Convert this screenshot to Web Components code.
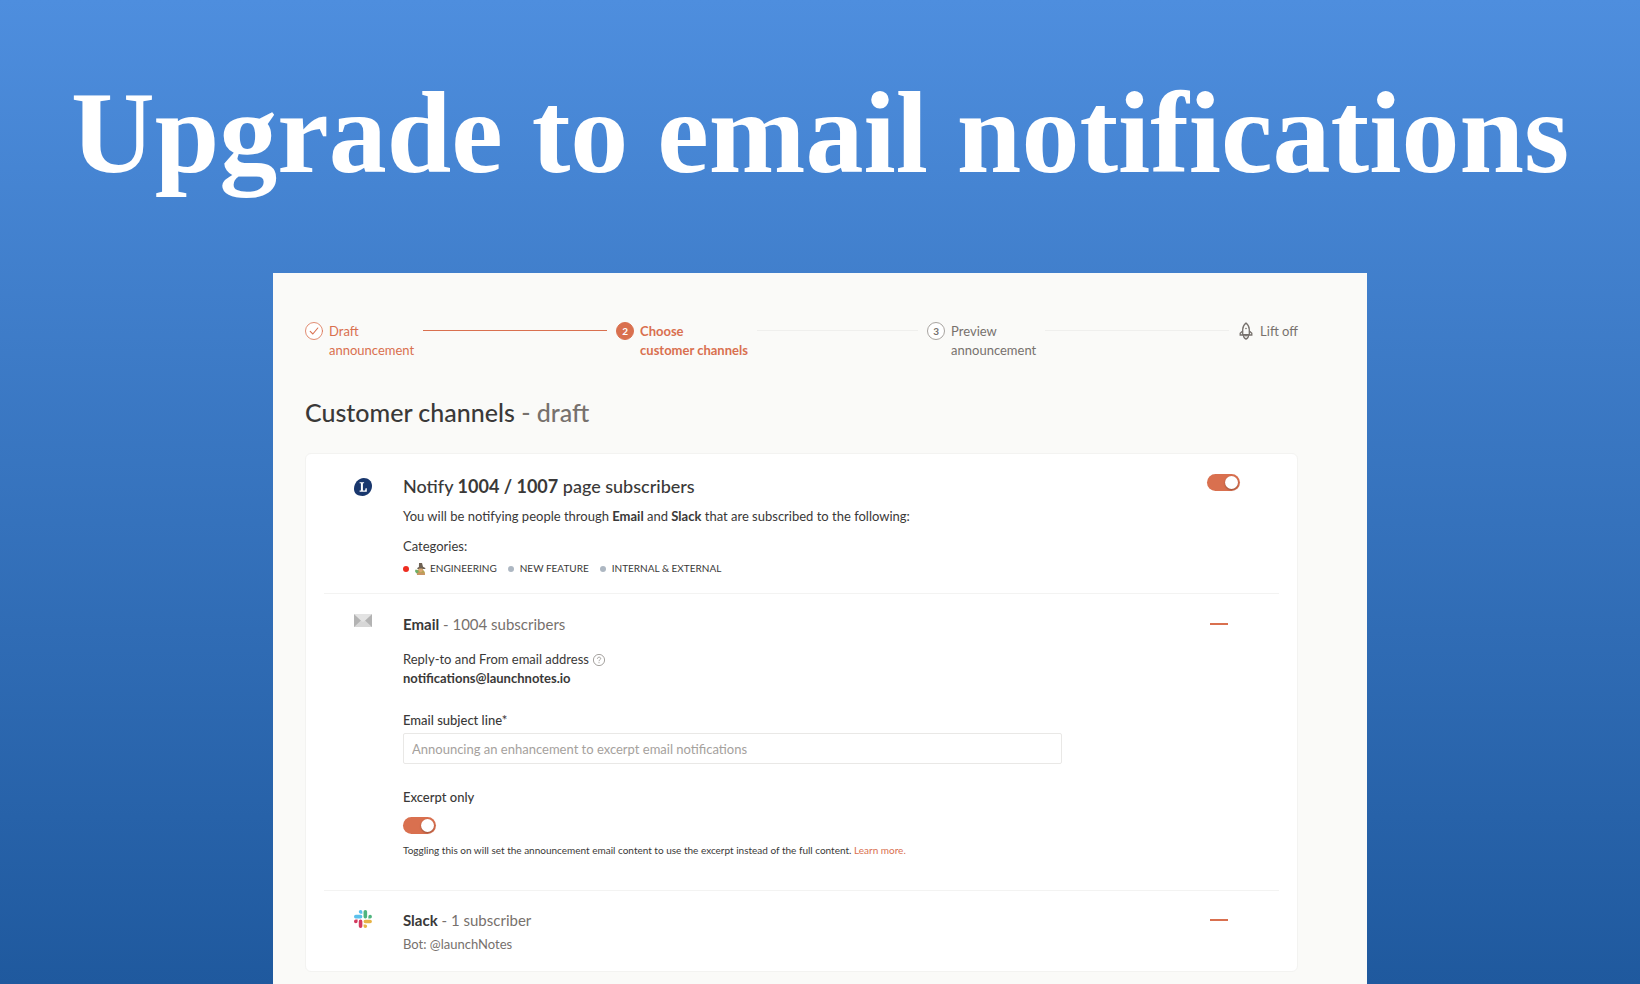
<!DOCTYPE html>
<html lang="en">
<head>
<meta charset="utf-8">
<meta name="viewport" content="width=device-width, initial-scale=1">
<title>Upgrade to email notifications</title>
<style>
    * {
        box-sizing: border-box;
    }

    body {
        --accent: #d9704f;
        --ink: #3a3938;
        --muted: #77716d;
        --line: #efefed;
        margin: 0;
        min-height: 100vh;
        display: flex;
        flex-direction: column;
        color: var(--ink);
        font: 13px/19px Lato, "Liberation Sans", sans-serif;
        background: linear-gradient(#4e8ede, #1f599e);
    }

    .draft {
        color: var(--muted);
    }
</style>
</head>
<body>

<page-hero>Upgrade to email notifications</page-hero>

<app-panel>
    <step-list>
        <step-item state="done">Draft<br>announcement</step-item>
        <step-item state="current" number="2">Choose<br>customer channels</step-item>
        <step-item number="3">Preview<br>announcement</step-item>
        <step-item state="last">Lift off</step-item>
    </step-list>

    <page-title>Customer channels <span class="draft">- draft</span></page-title>

    <channel-card>
        <channel-row icon="launch" size="large">
            <span slot="title">Notify <b>1004 / 1007</b> page subscribers</span>
            <toggle-switch slot="action" label="Notify page subscribers"></toggle-switch>
            <channel-audience></channel-audience>
        </channel-row>

        <channel-row icon="mail">
            <span slot="title"><b>Email</b> <span class="draft">- 1004 subscribers</span></span>
            <collapse-button slot="action" label="Collapse Email"></collapse-button>
            <email-settings></email-settings>
        </channel-row>

        <channel-row icon="slack" size="small">
            <span slot="title"><b>Slack</b> <span class="draft">- 1 subscriber</span></span>
            <collapse-button slot="action" label="Collapse Slack"></collapse-button>
            <span class="draft">Bot: @launchNotes</span>
        </channel-row>
    </channel-card>
</app-panel>

<script>
// Icons shared by the rows and the steps
const icons = {
    check: `<svg width="18" height="18" viewBox="0 0 18 18" fill="none" stroke="currentColor" stroke-linecap="round">
        <circle cx="9" cy="9" r="8.5" fill="#fff" stroke-width=".8"/>
        <path d="M5.2 9.3 7.8 12 12.8 6" stroke-width="1.1"/>
    </svg>`,
    rocket: `<svg width="16" height="18" viewBox="0 0 16 18" fill="none" stroke="currentColor" stroke-width="1.3" stroke-linejoin="round">
        <path d="M8 .9C5.700 2.800 4.700 5 4.700 7.400v5.300h6.600V7.400C11.300 5 10.300 2.800 8 .9z"/>
        <path d="M4.700 9 2.200 11.300v2.400M11.300 9l2.500 2.300v2.400M1.600 13h12.800"/>
        <path d="M5.500 12.900C5.500 15 6.500 16.500 8 17.200c1.500-.7 2.500-2.200 2.500-4.300M8 13v1.600"/>
        <circle cx="8" cy="6.500" r=".8" fill="currentColor" stroke="none"/>
    </svg>`,
    launch: `<svg width="18" height="18" viewBox="0 0 18 18">
        <path d="M9.800.1C14.500.1 18 3.300 18 8c0 5.400-4.300 9.900-9.400 9.900C3.500 17.900 0 15.600 0 11 0 5.300 4.300.1 9.800.1z" fill="#19376d"/>
        <path d="M5.600 4.200h4.500v1.100H8.900v7.100h2.200l.5-2.200h1.200v3.500H5.600v-1.100h1.300V5.300H5.600z" fill="#fff"/>
    </svg>`,
    mail: `<svg width="18" height="13" viewBox="0 0 18 13">
        <path d="M0 0h18v13H0z" fill="#d7d7d7"/>
        <path d="M0 0v13l7-6.500zM18 0v13l-7-6.500z" fill="#b3b3b3"/>
        <path d="M0 0h18l-7.800 7.300q-1.200 1-2.400 0z" fill="#e3e3e3"/>
    </svg>`,
    slack: `<svg width="18" height="18" viewBox="0 0 54 54">
        <path d="M19.700.1a5.400 5.400 0 0 0 0 10.800h5.400V5.500A5.400 5.400 0 0 0 19.700.1m0 14.400H5.400a5.400 5.400 0 0 0 0 10.800h14.300a5.400 5.400 0 0 0 0-10.800" fill="#5bc1ec"/>
        <path d="M53.800 19.900a5.400 5.400 0 0 0-10.800 0v5.400h5.400a5.400 5.400 0 0 0 5.400-5.400m-14.400 0V5.500a5.400 5.400 0 0 0-10.800 0v14.400a5.400 5.400 0 0 0 10.800 0" fill="#4fb57f"/>
        <path d="M34 54a5.400 5.400 0 0 0 0-10.800h-5.400v5.400A5.400 5.400 0 0 0 34 54m0-14.300h14.400a5.400 5.400 0 0 0 0-10.800H34a5.400 5.400 0 0 0 0 10.800" fill="#e7b345"/>
        <path d="M0 34.200a5.400 5.400 0 0 0 10.800 0v-5.400H5.400A5.400 5.400 0 0 0 0 34.200m14.300 0v14.400a5.400 5.400 0 0 0 10.800 0V34.200a5.400 5.400 0 0 0-10.800 0" fill="#d43a5f"/>
    </svg>`,
    help: `<svg width="12" height="12" viewBox="0 0 12 12" fill="none" stroke="currentColor" stroke-width=".8">
        <circle cx="6" cy="6" r="5.600"/>
        <path d="M4.400 4.800c0-2.200 3.300-2.100 3.300-.2C7.700 5.700 6 5.800 6 7.200M6 8.200v1"/>
    </svg>`,
    wizard: `<svg width="11" height="12" viewBox="0 0 11 12">
        <path d="M1.500 7.500 4 6h3.500l2.300 3v3H2z" fill="#b7a252"/>
        <path d="M4 0h3l1 3.800 2.300 1.100v1H2.500l-.3-.9L3.900 4z" fill="#6f6254"/>
        <path d="M4 5.500h3.500V8L5.800 9.600 4 8z" fill="#dca774"/>
        <path d="M.2 6.800h1.800l1.600 2L2 10.500.2 9z" fill="#6cae69"/>
        <path d="M2.200 10h7.600v2H2.200z" fill="#c99565"/>
    </svg>`
};

class PageHero extends HTMLElement {
    constructor() {
        super();
        this.attachShadow({ mode: "open" });
        this.shadowRoot.innerHTML = `
            <style>
                :host {
                    display: block;
                    padding: 65px 20px 72px;
                    text-align: center;
                }

                h1 {
                    margin: 0;
                    color: #fff;
                    font: bold 116px/136px "Liberation Serif", serif;
                }
            </style>
            <h1><slot></slot></h1>
        `;
    }
}
customElements.define("page-hero", PageHero);

class AppPanel extends HTMLElement {
    constructor() {
        super();
        this.attachShadow({ mode: "open" });
        this.shadowRoot.innerHTML = `
            <style>
                :host {
                    display: block;
                    flex: 1;
                    box-sizing: border-box;
                    width: 100%;
                    max-width: 1094px;
                    margin: 0 auto;
                    padding: 49px 69px 13px 32px;
                    background: #fafaf8;
                }
            </style>
            <main><slot></slot></main>
        `;
    }
}
customElements.define("app-panel", AppPanel);

class StepList extends HTMLElement {
    constructor() {
        super();
        this.attachShadow({ mode: "open" });
        this.shadowRoot.innerHTML = `
            <style>
                nav {
                    display: flex;
                    align-items: flex-start;
                }
            </style>
            <nav aria-label="Progress"><slot></slot></nav>
        `;
    }
}
customElements.define("step-list", StepList);

class StepItem extends HTMLElement {
    constructor() {
        super();
        this.attachShadow({ mode: "open" });
    }

    connectedCallback() {
        const state = this.getAttribute("state");
        let mark = `<span class="number">${this.getAttribute("number")}</span>`;
        if (state === "done") mark = icons.check;
        if (state === "last") mark = icons.rocket;

        this.shadowRoot.innerHTML = `
            <style>
                :host {
                    display: flex;
                    flex: 1;
                    gap: 6px;
                    color: var(--muted);
                    white-space: nowrap;
                }

                :host([state="last"]) {
                    flex: none;
                }

                :host([state="done"]), :host([state="current"]) {
                    color: var(--accent);
                }

                :host([state="current"]) {
                    font-weight: bold;
                }

                svg, .number {
                    flex: none;
                }

                .number {
                    box-sizing: border-box;
                    width: 18px;
                    height: 18px;
                    border: 1px solid #a8a4a0;
                    border-radius: 50%;
                    background: #fff;
                    text-align: center;
                    font: bold 10px/16px Lato, sans-serif;
                }

                :host([state="current"]) .number {
                    border-color: var(--accent);
                    background: var(--accent);
                    color: #fff;
                }

                .line {
                    flex: 1;
                    height: 1px;
                    margin: 8px 9px 0 3px;
                    background: var(--line);
                }

                :host([state="done"]) .line {
                    background: var(--accent);
                }

                :host([state="last"]) .line {
                    display: none;
                }
            </style>
            ${mark}
            <span><slot></slot></span>
            <span class="line"></span>
        `;
    }
}
customElements.define("step-item", StepItem);

class PageTitle extends HTMLElement {
    constructor() {
        super();
        this.attachShadow({ mode: "open" });
        this.shadowRoot.innerHTML = `
            <style>
                h2 {
                    margin: 36px 0 25px;
                    font-size: 25px;
                    font-weight: 500;
                    line-height: 32px;
                }
            </style>
            <h2><slot></slot></h2>
        `;
    }
}
customElements.define("page-title", PageTitle);

class ChannelCard extends HTMLElement {
    constructor() {
        super();
        this.attachShadow({ mode: "open" });
        this.shadowRoot.innerHTML = `
            <style>
                :host {
                    display: block;
                    padding: 0 18px;
                    border: 1px solid #f3f3f1;
                    border-radius: 6px;
                    background: #fff;
                }

                ::slotted(:not(:first-child)) {
                    border-top: 1px solid #f3f3f2;
                }
            </style>
            <slot></slot>
        `;
    }
}
customElements.define("channel-card", ChannelCard);

class ChannelRow extends HTMLElement {
    constructor() {
        super();
        this.attachShadow({ mode: "open" });
    }

    connectedCallback() {
        this.shadowRoot.innerHTML = `
            <style>
                :host {
                    display: grid;
                    grid-template-columns: 49px 1fr 34px;
                    padding: 20px 38px 30px 30px;
                }

                :host([size="large"]) {
                    padding-bottom: 15px;
                }

                :host([size="small"]) {
                    padding-top: 19px;
                    padding-bottom: 17px;
                }

                svg {
                    display: block;
                }

                :host([size="large"]) svg {
                    margin-top: 4px;
                }

                h3 {
                    margin: 0 0 5px;
                    font-size: 15px;
                    font-weight: normal;
                    line-height: 20px;
                }

                :host([size="large"]) h3 {
                    margin-bottom: 9px;
                    font-size: 18px;
                    font-weight: 500;
                    line-height: 24px;
                }
            </style>
            ${icons[this.getAttribute("icon")]}
            <section>
                <h3><slot name="title"></slot></h3>
                <slot></slot>
            </section>
            <slot name="action"></slot>
        `;
    }
}
customElements.define("channel-row", ChannelRow);

class ToggleSwitch extends HTMLElement {
    constructor() {
        super();
        this.attachShadow({ mode: "open" });
    }

    connectedCallback() {
        this.shadowRoot.innerHTML = `
            <style>
                :host {
                    display: block;
                }

                input {
                    appearance: none;
                    display: flex;
                    box-sizing: border-box;
                    width: 33px;
                    height: 17px;
                    margin: 0;
                    padding: 2px;
                    border-radius: 9px;
                    background: #c9c6c3;
                    cursor: pointer;
                }

                input:checked {
                    justify-content: flex-end;
                    background: var(--accent);
                }

                input::before {
                    content: "";
                    width: 13px;
                    height: 13px;
                    border-radius: 50%;
                    background: #fff;
                    box-shadow: 0 1px 2px rgba(0, 0, 0, .3);
                }
            </style>
            <input type="checkbox" role="switch" aria-label="${this.getAttribute("label")}" checked>
        `;
    }
}
customElements.define("toggle-switch", ToggleSwitch);

class CollapseButton extends HTMLElement {
    constructor() {
        super();
        this.attachShadow({ mode: "open" });
    }

    connectedCallback() {
        this.shadowRoot.innerHTML = `
            <style>
                button {
                    display: flex;
                    align-items: center;
                    width: 24px;
                    height: 20px;
                    padding: 0 3px;
                    border: 0;
                    background: none;
                    cursor: pointer;
                }

                span {
                    width: 18px;
                    height: 2px;
                    background: var(--accent);
                }
            </style>
            <button type="button" aria-label="${this.getAttribute("label")}"><span></span></button>
        `;
    }
}
customElements.define("collapse-button", CollapseButton);

class ChannelAudience extends HTMLElement {
    constructor() {
        super();
        this.attachShadow({ mode: "open" });
        this.categories = [
            { name: "ENGINEERING", color: "#ee2d20", icon: icons.wizard },
            { name: "NEW FEATURE", color: "#adb7c2", icon: "" },
            { name: "INTERNAL & EXTERNAL", color: "#adb7c2", icon: "" }
        ];
        this.render();
    }

    render() {
        this.shadowRoot.innerHTML = `
            <style>
                p {
                    margin: 0 0 11px;
                }

                .label {
                    margin-bottom: 3px;
                }

                ul {
                    display: flex;
                    flex-wrap: wrap;
                    gap: 11px;
                    margin: 0;
                    padding: 0;
                    list-style: none;
                    font-size: 10px;
                }

                li {
                    display: flex;
                    align-items: center;
                    gap: 4px;
                }

                i {
                    width: 6px;
                    height: 6px;
                    margin-right: 2px;
                    border-radius: 50%;
                }
            </style>
            <p>You will be notifying people through <b>Email</b> and <b>Slack</b> that are subscribed to the following:</p>
            <p class="label">Categories:</p>
            <ul></ul>
        `;

        const list = this.shadowRoot.querySelector("ul");
        this.categories.forEach((category) => {
            const li = document.createElement("li");
            li.innerHTML = `<i style="background: ${category.color}"></i>${category.icon}<span></span>`;
            li.querySelector("span").textContent = category.name;
            list.appendChild(li);
        });
    }
}
customElements.define("channel-audience", ChannelAudience);

class EmailSettings extends HTMLElement {
    constructor() {
        super();
        this.attachShadow({ mode: "open" });
        this.shadowRoot.innerHTML = `
            <style>
                :host {
                    display: block;
                    padding-top: 11px;
                }

                p {
                    margin: 0;
                }

                .reply {
                    display: flex;
                    align-items: center;
                    gap: 4px;
                }

                svg {
                    color: #8f8b88;
                }

                .field {
                    margin: 23px 0 24px;
                }

                label, .caption {
                    display: block;
                    font-weight: 500;
                }

                input {
                    box-sizing: border-box;
                    display: block;
                    width: 82%;
                    height: 31px;
                    margin-top: 3px;
                    padding: 0 8px;
                    border: 1px solid #e9e8e6;
                    border-radius: 2px;
                    background: #fff;
                    font: inherit;
                }

                input::placeholder {
                    color: #a5a19d;
                    opacity: 1;
                }

                toggle-switch {
                    margin: 10px 0 7px;
                }

                .note {
                    font-size: 10px;
                }

                a {
                    color: var(--accent);
                    text-decoration: none;
                }
            </style>
            <p class="reply">Reply-to and From email address ${icons.help}</p>
            <p><b>notifications@launchnotes.io</b></p>
            <div class="field">
                <label for="subject">Email subject line*</label>
                <input id="subject" type="text" placeholder="Announcing an enhancement to excerpt email notifications">
            </div>
            <p class="caption">Excerpt only</p>
            <toggle-switch label="Excerpt only"></toggle-switch>
            <p class="note">Toggling this on will set the announcement email content to use the excerpt instead of the full content. <a href="#">Learn more.</a></p>
        `;
    }
}
customElements.define("email-settings", EmailSettings);
</script>
</body>
</html>
